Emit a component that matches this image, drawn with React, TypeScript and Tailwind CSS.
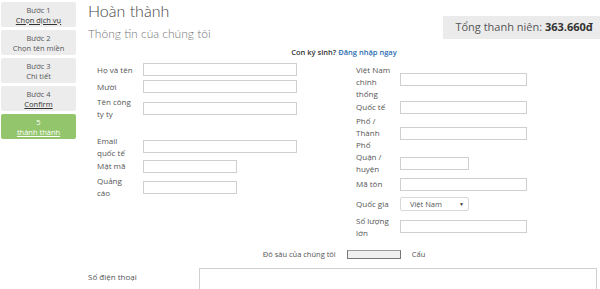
const steps = [
  { title: 'Bước 1', sub: 'Chọn dịch vụ', link: true },
  { title: 'Bước 2', sub: 'Chọn tên miền', link: false },
  { title: 'Bước 3', sub: 'Chi tiết', link: false },
  { title: 'Bước 4', sub: 'Confirm', link: true },
];

function Field({ w }: { w: string }) {
  return <div className={`h-[13px] border border-[#cfcfcf] bg-white ${w}`} />;
}

export default function App() {
  return (
    <div className="flex h-[289px] w-[600px] overflow-hidden bg-white font-['Open_Sans',sans-serif] text-[#555]">
      {/* Steps */}
      <div className="ml-[1px] mt-[2px] flex w-[75px] shrink-0 flex-col gap-[3px]">
        {steps.map((s) => (
          <div
            key={s.title}
            className="flex h-[25px] flex-col items-center justify-center rounded-[2px] bg-[#ececec] text-[7.5px] leading-[10px]"
          >
            <span className="text-[#555]">{s.title}</span>
            <span className={s.link ? 'text-[#333] underline' : 'text-[#555]'}>{s.sub}</span>
          </div>
        ))}
        <div className="flex h-[25px] flex-col items-center justify-center rounded-[2px] bg-[#93c56c] text-[7.5px] leading-[10px] text-white">
          <span>5</span>
          <span className="underline">thành thành</span>
        </div>
      </div>

      {/* Main */}
      <div className="ml-[12px] flex min-w-0 flex-1 flex-col">
        <div className="flex items-start justify-between">
          <div>
            <h1 className="pt-[1px] font-['Lato',sans-serif] text-[16px] font-light leading-[20px] text-[#444]">Hoàn thành</h1>
            <p className="mt-[5px] font-['Lato',sans-serif] text-[12px] font-light leading-[16px] text-[#777]">Thông tin của chúng tôi</p>
          </div>
          <div className="mt-[16px] flex h-[23px] items-center bg-[#ebebeb] pl-[12px] pr-[7px] text-[11px] text-[#555]">
            Tổng thanh niên:&nbsp;<b className="font-bold text-[#333]">363.660đ</b>
          </div>
        </div>

        <p className="mt-[5px] text-center text-[7.5px] font-semibold leading-[11px] text-[#333]">
          Con ký sinh? <span className="text-[#2b6cb0]">Đăng nhập ngay</span>
        </p>

        {/* Form */}
        <div className="mt-[3px] flex h-[178px] text-[8px] leading-[12px]">
          <div className="ml-[9px] flex w-[200px] flex-col">
            <div className="flex h-[17px] items-center">
              <span className="w-[46px]">Họ và tên</span>
              <Field w="w-[154px]" />
            </div>
            <div className="flex h-[17px] items-center">
              <span className="w-[46px]">Mười</span>
              <Field w="w-[154px]" />
            </div>
            <div className="flex h-[26px] items-center">
              <span className="w-[46px] pr-[10px]">Tên công ty ty</span>
              <Field w="w-[154px]" />
            </div>
            <div className="flex h-[14.5px]" />
            <div className="flex h-[22px] items-center">
              <span className="w-[46px] pr-[10px]">Email quốc tế</span>
              <Field w="w-[154px]" />
            </div>
            <div className="flex h-[17px] items-center">
              <span className="w-[46px]">Mật mã</span>
              <Field w="w-[94px]" />
            </div>
            <div className="flex h-[25px] items-center">
              <span className="w-[46px] pr-[10px]">Quảng cáo</span>
              <Field w="w-[94px]" />
            </div>
          </div>

          <div className="ml-[59px] flex w-[171px] flex-col pt-[2.5px]">
            <div className="flex h-[36px] items-center">
              <span className="w-[44px] pr-[6px]">Việt Nam chính thống</span>
              <Field w="w-[127px] -mt-[4px]" />
            </div>
            <div className="flex h-[16px] items-center">
              <span className="w-[44px]">Quốc tế</span>
              <Field w="w-[127px]" />
            </div>
            <div className="flex h-[36px] items-center">
              <span className="w-[44px] pr-[10px]">Phố / Thành Phố</span>
              <Field w="w-[127px]" />
            </div>
            <div className="flex h-[24px] items-center">
              <span className="w-[44px] pr-[10px]">Quận / huyện</span>
              <Field w="w-[69px]" />
            </div>
            <div className="flex h-[18px] items-center">
              <span className="w-[44px]">Mã tôn</span>
              <Field w="w-[127px]" />
            </div>
            <div className="flex h-[22px] items-center">
              <span className="w-[44px]">Quốc gia</span>
              <div className="flex h-[14px] w-[69px] items-center justify-between rounded-[2px] border border-[#d8d8d8] pl-[9px] pr-[4px] text-[7.5px]">
                <span>Việt Nam</span>
                <span className="text-[5px] text-[#333]">▼</span>
              </div>
            </div>
            <div className="flex h-[24px] items-center">
              <span className="w-[44px] pr-[6px]">Số lượng lớn</span>
              <Field w="w-[127px] -mt-[2px]" />
            </div>
          </div>
        </div>

        <div className="mt-[9.5px] flex h-[12px] items-center justify-center text-[7.5px]">
          <span>Đô sâu của chúng tôi</span>
          <div className="ml-[11px] h-[9px] w-[54px] border border-[#777] border-t-[#999] bg-[#f0f0f0]" />
          <span className="ml-[11px]">Cấu</span>
        </div>

        <div className="mt-[8px] flex items-start text-[8px] leading-[12px]">
          <span className="mt-[3px] w-[111px]">Số điện thoại</span>
          <div className="mr-[3px] h-[24px] flex-1 border border-[#d0d0d0]" />
        </div>
      </div>
    </div>
  );
}
